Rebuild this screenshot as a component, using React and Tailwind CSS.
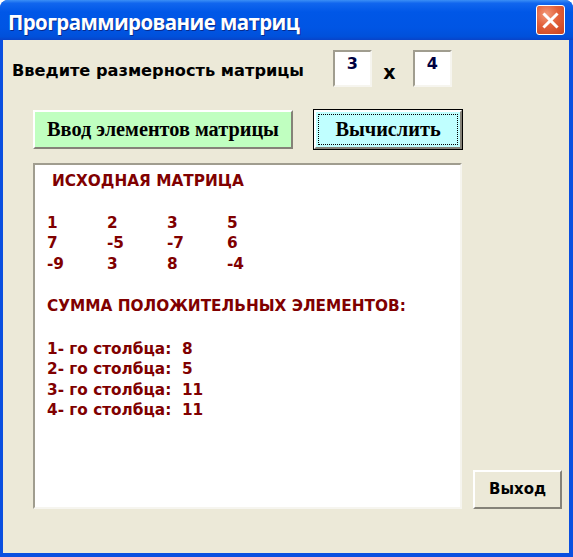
import React from "react";

const tahoma = { fontFamily: '"DejaVu Sans", Verdana, sans-serif' };

function Sunken({ className = "", children }) {
  return (
    <div className={`border-t-2 border-l-2 border-b-2 border-r-2 border-t-[#a09d8f] border-l-[#a09d8f] border-b-[#f6f5ef] border-r-[#f6f5ef] bg-white ${className}`}>
      {children}
    </div>
  );
}

export default function App() {
  const matrix = [
    ["1", "2", "3", "5"],
    ["7", "-5", "-7", "6"],
    ["-9", "3", "8", "-4"],
  ];
  const sums = ["8", "5", "11", "11"];
  return (
    <div className="w-[573px] h-[557px] flex flex-col rounded-t-[8px] overflow-hidden bg-[#0a4fe0]">
      {/* title bar */}
      <div className="h-[40px] flex items-center justify-between pl-[8px] pr-[8px] bg-[linear-gradient(to_bottom,#3b8ff6_0%,#1166ee_8%,#0057e7_30%,#0055e4_70%,#0050da_92%,#0843c8_100%)]">
        <span
          className="mt-[5px] text-white font-bold text-[20.5px] tracking-[-0.6px] [text-shadow:1px_1px_0_#0a2a8a]"
          style={{ fontFamily: '"Open Sans", "Noto Sans", sans-serif' }}
        >
          Программирование матриц
        </span>
        <div className="w-[29px] h-[30px] rounded-[3px] border border-white bg-[radial-gradient(circle_at_35%_30%,#f39a7a_0%,#e2603a_45%,#c8421f_100%)] flex items-center justify-center">
          <svg width="17" height="17" viewBox="0 0 17 17">
            <path d="M2.5 2.5 L14.5 14.5 M14.5 2.5 L2.5 14.5" stroke="white" strokeWidth="3" strokeLinecap="square" />
          </svg>
        </div>
      </div>
      {/* body */}
      <div className="flex-1 flex flex-col bg-[#ece9d8] ml-[3px] mr-[4px] mb-[4px]">
        {/* row 1 */}
        <div className="flex items-start mt-[10px] pl-[9px]">
          <div className="w-[321px] h-[37px] flex items-center pt-[6px] text-[16.2px] font-bold text-black" style={tahoma}>
            Введите размерность матрицы
          </div>
          <Sunken className="w-[39px] h-[37px] flex justify-end pr-[12px] pt-[4px]">
            <span className="text-[16px] font-bold text-[#000040] leading-none" style={tahoma}>3</span>
          </Sunken>
          <div className="w-[41px] h-[37px] flex items-center justify-center pt-[7px] pr-[6px] text-[19px] font-bold text-black" style={tahoma}>
            x
          </div>
          <Sunken className="w-[39px] h-[37px] flex justify-end pr-[12px] pt-[4px]">
            <span className="text-[16px] font-bold text-[#000040] leading-none" style={tahoma}>4</span>
          </Sunken>
        </div>
        {/* row 2 */}
        <div className="flex items-center mt-[22px] pl-[30px]">
          <div className="w-[260px] h-[39px] bg-[#c0ffc0] border-2 border-t-white border-l-white border-b-[#858278] border-r-[#858278] flex items-center justify-center">
            <span className="text-[20.3px] font-bold text-black" style={{ fontFamily: '"Liberation Serif", serif' }}>
              Ввод элементов матрицы
            </span>
          </div>
          <div className="ml-[20px] w-[150px] h-[41px] border border-black">
            <div className="w-full h-full bg-[#c0ffff] border-2 border-t-white border-l-white border-b-[#858278] border-r-[#858278] p-[2px]">
              <div className="w-full h-full border border-dotted border-black flex items-center justify-center">
                <span className="text-[20.3px] font-bold text-black" style={{ fontFamily: '"Liberation Serif", serif' }}>
                  Вычислить
                </span>
              </div>
            </div>
          </div>
        </div>
        {/* row 3 */}
        <div className="flex items-end mt-[13px] pl-[30px]">
          <Sunken className="w-[429px] h-[346px] pl-[12px] pt-[6px]">
            <div className="text-[15.3px] font-bold text-[#800000] leading-[20.5px] whitespace-pre" style={tahoma}>
              <div className="pl-[5px]">ИСХОДНАЯ МАТРИЦА</div>
              <div className="h-[21px]" />
              {matrix.map((row, i) => (
                <div key={i} className="flex">
                  {row.map((v, j) => (
                    <div key={j} className="w-[60px]">{v}</div>
                  ))}
                </div>
              ))}
              <div className="h-[22px]" />
              <div>СУММА ПОЛОЖИТЕЛЬНЫХ ЭЛЕМЕНТОВ:</div>
              <div className="h-[22.5px]" />
              {sums.map((s, i) => (
                <div key={i} className="leading-[20.3px]">{`${i + 1}- го столбца:  ${s}`}</div>
              ))}
            </div>
          </Sunken>
          <div className="ml-[11px] w-[89px] h-[39px] bg-[#ece9d8] border-2 border-t-white border-l-white border-b-[#858278] border-r-[#858278] flex items-center justify-center">
            <span className="text-[15px] font-bold text-black" style={tahoma}>Выход</span>
          </div>
        </div>
      </div>
    </div>
  );
}
